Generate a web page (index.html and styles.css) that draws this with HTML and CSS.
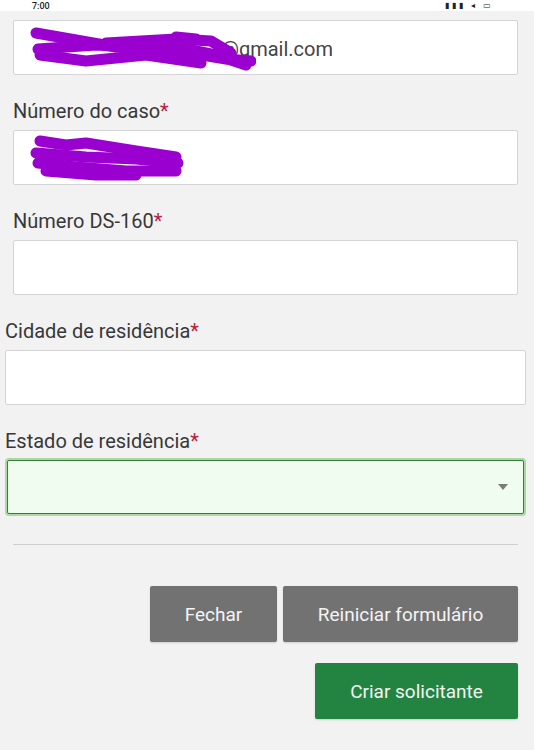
FILE: index.html
```html
<!DOCTYPE html>
<html lang="pt-BR">
<head>
    <meta charset="UTF-8">
    <meta name="viewport" content="width=device-width, initial-scale=1.0">
    <title>Criar solicitante</title>
    <link rel="stylesheet" href="styles.css">
</head>
<body>
    <div class="status-bar">
        <span class="clock">7:00</span>
        <span class="status-icons">▮▮▮ ◂ ▭</span>
    </div>

    <form class="applicant-form">
        <div class="field">
            <div class="form-input has-value">
                <svg class="scribble" width="230" height="46" viewBox="0 0 230 46">
                    <path d="M10 8 L90 22 L150 22 L190 30 L220 40" />
                    <path d="M12 24 L70 20 L140 24 L200 34 L225 36" />
                    <path d="M14 30 L60 36 L120 30 L175 38" />
                    <path d="M80 18 L150 14 L185 16 L205 28" />
                    <path d="M150 12 L170 14" />
                </svg>
                <span class="value">@gmail.com</span>
            </div>
        </div>

        <div class="field">
            <label class="form-label">Número do caso<span class="req">*</span></label>
            <div class="form-input">
                <svg class="scribble" width="170" height="50" viewBox="0 0 170 50">
                    <path d="M14 6 L40 10 L60 8 L110 16 L150 22" />
                    <path d="M10 18 L60 22 L110 24 L152 28" />
                    <path d="M12 28 L50 32 L100 36 L150 36" />
                    <path d="M20 36 L70 40 L110 40" />
                </svg>
            </div>
        </div>

        <div class="field">
            <label class="form-label">Número DS-160<span class="req">*</span></label>
            <div class="form-input"></div>
        </div>

        <div class="field wide">
            <label class="form-label">Cidade de residência<span class="req">*</span></label>
            <div class="form-input"></div>
        </div>

        <div class="field wide">
            <label class="form-label">Estado de residência<span class="req">*</span></label>
            <div class="form-select">
                <span class="select-arrow"></span>
            </div>
        </div>

        <hr class="divider">

        <div class="actions">
            <button type="button" class="btn btn-grey btn-close">Fechar</button>
            <button type="button" class="btn btn-grey btn-reset">Reiniciar formulário</button>
        </div>
        <div class="actions">
            <button type="button" class="btn btn-green">Criar solicitante</button>
        </div>
    </form>
</body>
</html>
```

FILE: styles.css
```css
body {
    margin: 0;
    background-color: #f2f2f2;
    font-family: Roboto, "Liberation Sans", Arial, sans-serif;
    color: #333;
}

.status-bar {
    height: 11px;
    background-color: #fff;
    display: flex;
    justify-content: space-between;
    align-items: flex-end;
    padding: 0 40px 0 32px;
    font-size: 9px;
    line-height: 10px;
    color: #222;
}

.clock {
    font-weight: 500;
}

.status-icons {
    font-size: 8px;
    letter-spacing: 3px;
}

.applicant-form {
    padding: 9px 16px 0 13px;
}

.field {
    margin-bottom: 24px;
}

.field.wide {
    margin-left: -8px;
    margin-right: -8px;
}

.form-label {
    display: block;
    font-size: 20px;
    line-height: 24px;
    margin-bottom: 7px;
    color: #383838;
}

.req {
    color: #b8203a;
}

.form-input {
    position: relative;
    height: 53px;
    background-color: #fff;
    border: 1px solid #d4d4d4;
    border-radius: 2px;
    display: flex;
    align-items: center;
    padding-left: 12px;
}

.value {
    margin-left: 195px;
    font-size: 20px;
    color: #444;
    padding-top: 2px;
}

.scribble {
    position: absolute;
    left: 12px;
    top: 4px;
}

.scribble path {
    fill: none;
    stroke: #9a00cf;
    stroke-width: 11;
    stroke-linecap: round;
    stroke-linejoin: round;
}

.form-select {
    height: 52px;
    margin: 2px;
    background-color: #f0fcef;
    border: 1px solid #3c7a3c;
    border-radius: 2px;
    box-shadow: 0 0 0 2px #a7dba0;
    display: flex;
    align-items: center;
    justify-content: flex-end;
    padding-right: 15px;
}

.select-arrow {
    width: 0;
    height: 0;
    border-left: 5px solid transparent;
    border-right: 5px solid transparent;
    border-top: 6px solid #7a7a7a;
}

.divider {
    border: none;
    border-top: 1px solid #cfcfcf;
    margin: 30px 0 41px;
}

.actions {
    display: flex;
    justify-content: flex-end;
    gap: 6px;
    margin-bottom: 21px;
}

.btn {
    height: 56px;
    border: none;
    border-radius: 2px;
    font-family: Roboto, "Liberation Sans", Arial, sans-serif;
    font-size: 19px;
    color: #f4f4f4;
    cursor: pointer;
    box-shadow: 0 1px 2px rgba(0,0,0,0.15);
}

.btn-grey {
    background-color: #727272;
}

.btn-close {
    width: 127px;
}

.btn-reset {
    width: 235px;
}

.btn-green {
    width: 203px;
    background-color: #228440;
}
```
